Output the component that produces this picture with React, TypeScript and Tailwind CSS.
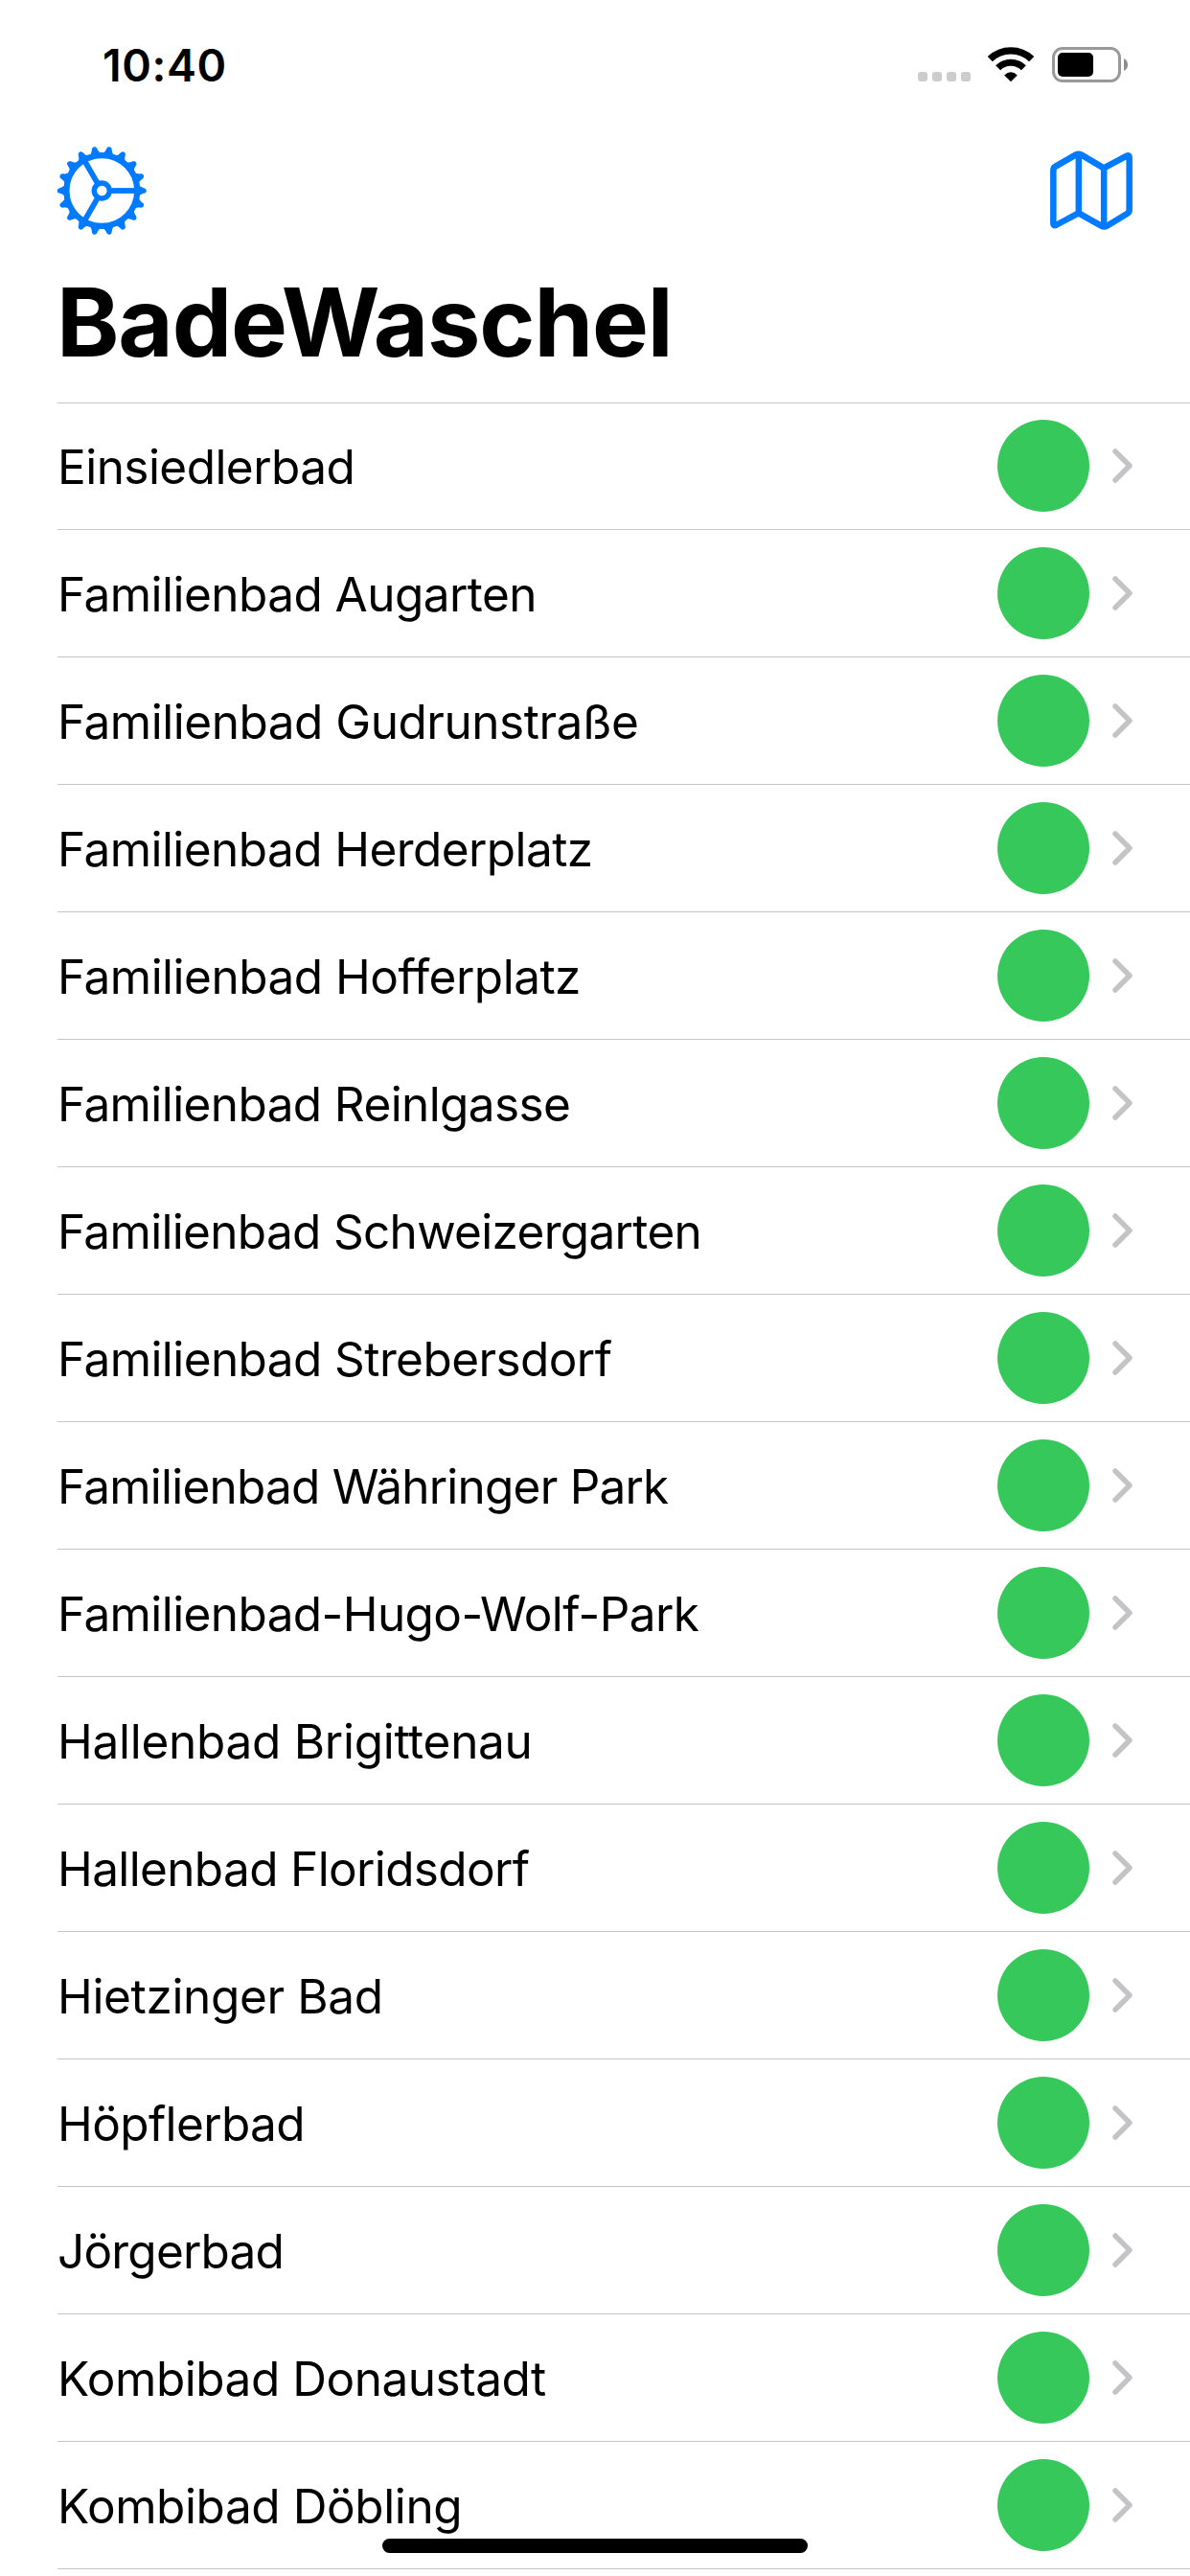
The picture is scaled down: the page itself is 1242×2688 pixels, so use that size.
const pools = [
  { name: 'Einsiedlerbad', tracking: 'tracking-[-0.55px]' },
  { name: 'Familienbad Augarten', tracking: 'tracking-[-0.54px]' },
  { name: 'Familienbad Gudrunstraße', tracking: 'tracking-[-0.48px]' },
  { name: 'Familienbad Herderplatz', tracking: 'tracking-[-0.57px]' },
  { name: 'Familienbad Hofferplatz', tracking: 'tracking-[-0.51px]' },
  { name: 'Familienbad Reinlgasse', tracking: 'tracking-[-0.6px]' },
  { name: 'Familienbad Schweizergarten', tracking: 'tracking-[-0.68px]' },
  { name: 'Familienbad Strebersdorf', tracking: 'tracking-[-0.58px]' },
  { name: 'Familienbad Währinger Park', tracking: 'tracking-[-0.78px]' },
  { name: 'Familienbad-Hugo-Wolf-Park', tracking: 'tracking-[-0.6px]' },
  { name: 'Hallenbad Brigittenau', tracking: 'tracking-[-0.28px]' },
  { name: 'Hallenbad Floridsdorf', tracking: 'tracking-[-0.64px]' },
  { name: 'Hietzinger Bad', tracking: 'tracking-[-0.35px]' },
  { name: 'Höpflerbad', tracking: 'tracking-[-0.63px]' },
  { name: 'Jörgerbad', tracking: 'tracking-[-0.8px]' },
  { name: 'Kombibad Donaustadt', tracking: 'tracking-[-0.47px]' },
  { name: 'Kombibad Döbling', tracking: 'tracking-[-0.41px]' },
];

const teeth = Array.from({ length: 18 }, (_, i) => i * 20);

function GearIcon() {
  return (
    <svg className="h-24 w-24" viewBox="-48.3 -48 96 96" fill="none" stroke="#007aff">
      <circle r="36.9" strokeWidth="6.2" />
      <circle r="8" strokeWidth="5.5" />
      {[0, 120, 240].map((a) => (
        <path key={a} d="M10 0H37" strokeWidth="5.8" transform={`rotate(${a})`} />
      ))}
      {teeth.map((a) => (
        <path
          key={a}
          d="M38 -6.4C40 -4.2 42 -3.3 44.6 -2.6C47.1 -1.8 47.1 1.8 44.6 2.6C42 3.3 40 4.2 38 6.4Z"
          fill="#007aff"
          stroke="none"
          transform={`rotate(${a})`}
        />
      ))}
    </svg>
  );
}

function MapIcon() {
  return (
    <svg
      className="h-[84px] w-[86px]"
      viewBox="78 80 258 252"
      fill="none"
      stroke="#007aff"
      strokeWidth="19.5"
      strokeLinejoin="round"
    >
      <path d="M88 142Q88 134 95 130L159 93Q167 89 175 93L246 135L318 97Q326 93 326 101V266Q326 274 319 278L256 316Q247 321 238 316L167 276L96 314Q88 317 88 308Z" />
      <path d="M167.500 92V276M246.500 136V319" />
    </svg>
  );
}

function WifiIcon() {
  return (
    <svg className="h-[37px] w-12" viewBox="0 0 48 37" fill="none" stroke="#000">
      <path d="M2.300 12.700A31 31 0 0 1 45.700 12.700" strokeWidth="7.400" />
      <path d="M10.600 21.700A19 19 0 0 1 37.400 21.700" strokeWidth="7" />
      <path d="M24 36.300L17.200 29.500Q24 23.200 30.800 29.500Z" fill="#000" stroke="none" />
    </svg>
  );
}

function Battery() {
  return (
    <div className="flex items-center gap-[3px]">
      <div className="h-[37px] w-[72px] rounded-[11px] border-[3px] border-[#999] p-[3px]">
        <div className="h-[25px] w-[37px] rounded-[5px] bg-black" />
      </div>
      <svg className="h-[13px] w-1" viewBox="0 0 4 13" fill="#8c8c8c">
        <path d="M0 0Q4 2 4 6.500T0 13Z" />
      </svg>
    </div>
  );
}

function Chevron() {
  return (
    <svg
      className="h-9 w-[21px]"
      viewBox="0 0 21 36"
      fill="none"
      stroke="#c4c4c6"
      strokeWidth="5.500"
      strokeLinecap="round"
      strokeLinejoin="round"
    >
      <path d="M3 3L18 18L3 33" />
    </svg>
  );
}

export default function App() {
  return (
    <div className="relative flex h-[2688px] w-[1242px] flex-col overflow-hidden bg-white font-['Inter',sans-serif] text-black">
      <header className="flex h-[132px] shrink-0 items-start justify-between pl-[107px] pr-[65px]">
        <span className="mt-[38px] text-[46.500px] font-semibold leading-[60px] tracking-[0.600px]">10:40</span>
        <div className="mt-[49px] flex items-start">
          <div className="mt-[26px] mr-[18px] flex gap-[5px]">
            {[0, 1, 2, 3].map((i) => (
              <span key={i} className="h-2.5 w-2.5 rounded-[3px] bg-[#ccc]" />
            ))}
          </div>
          <div className="mr-[19px]">
            <WifiIcon />
          </div>
          <Battery />
        </div>
      </header>
      <nav className="flex h-[134px] shrink-0 items-center justify-between pl-[58px] pr-[60px]">
        <GearIcon />
        <MapIcon />
      </nav>
      <h1 className="h-[154px] shrink-0 pl-[59px] pt-[10px] text-[99px] font-bold leading-[120px] tracking-[-1.150px]">
        BadeWaschel
      </h1>
      <ul className="ml-[60px] shrink-0 border-t border-[#c6c6c8]">
        {pools.map(({ name, tracking }) => (
          <li
            key={name}
            className="flex h-[133px] items-start border-b border-[#c6c6c8] pt-[18px] pr-[60px] first:h-[132px] first:pt-[17px]"
          >
            <span
              className={`flex-1 whitespace-nowrap text-[49.500px] leading-[98px] [font-feature-settings:'calt'_0] [font-variant-ligatures:none] ${tracking}`}
            >
              {name}
            </span>
            <span className="mr-6 h-24 w-24 rounded-full bg-[#36c85b]" />
            <span className="mt-[30px]">
              <Chevron />
            </span>
          </li>
        ))}
      </ul>
      <div className="absolute left-[399px] top-[2649px] h-[15px] w-[444px] rounded-full bg-black" />
    </div>
  );
}
